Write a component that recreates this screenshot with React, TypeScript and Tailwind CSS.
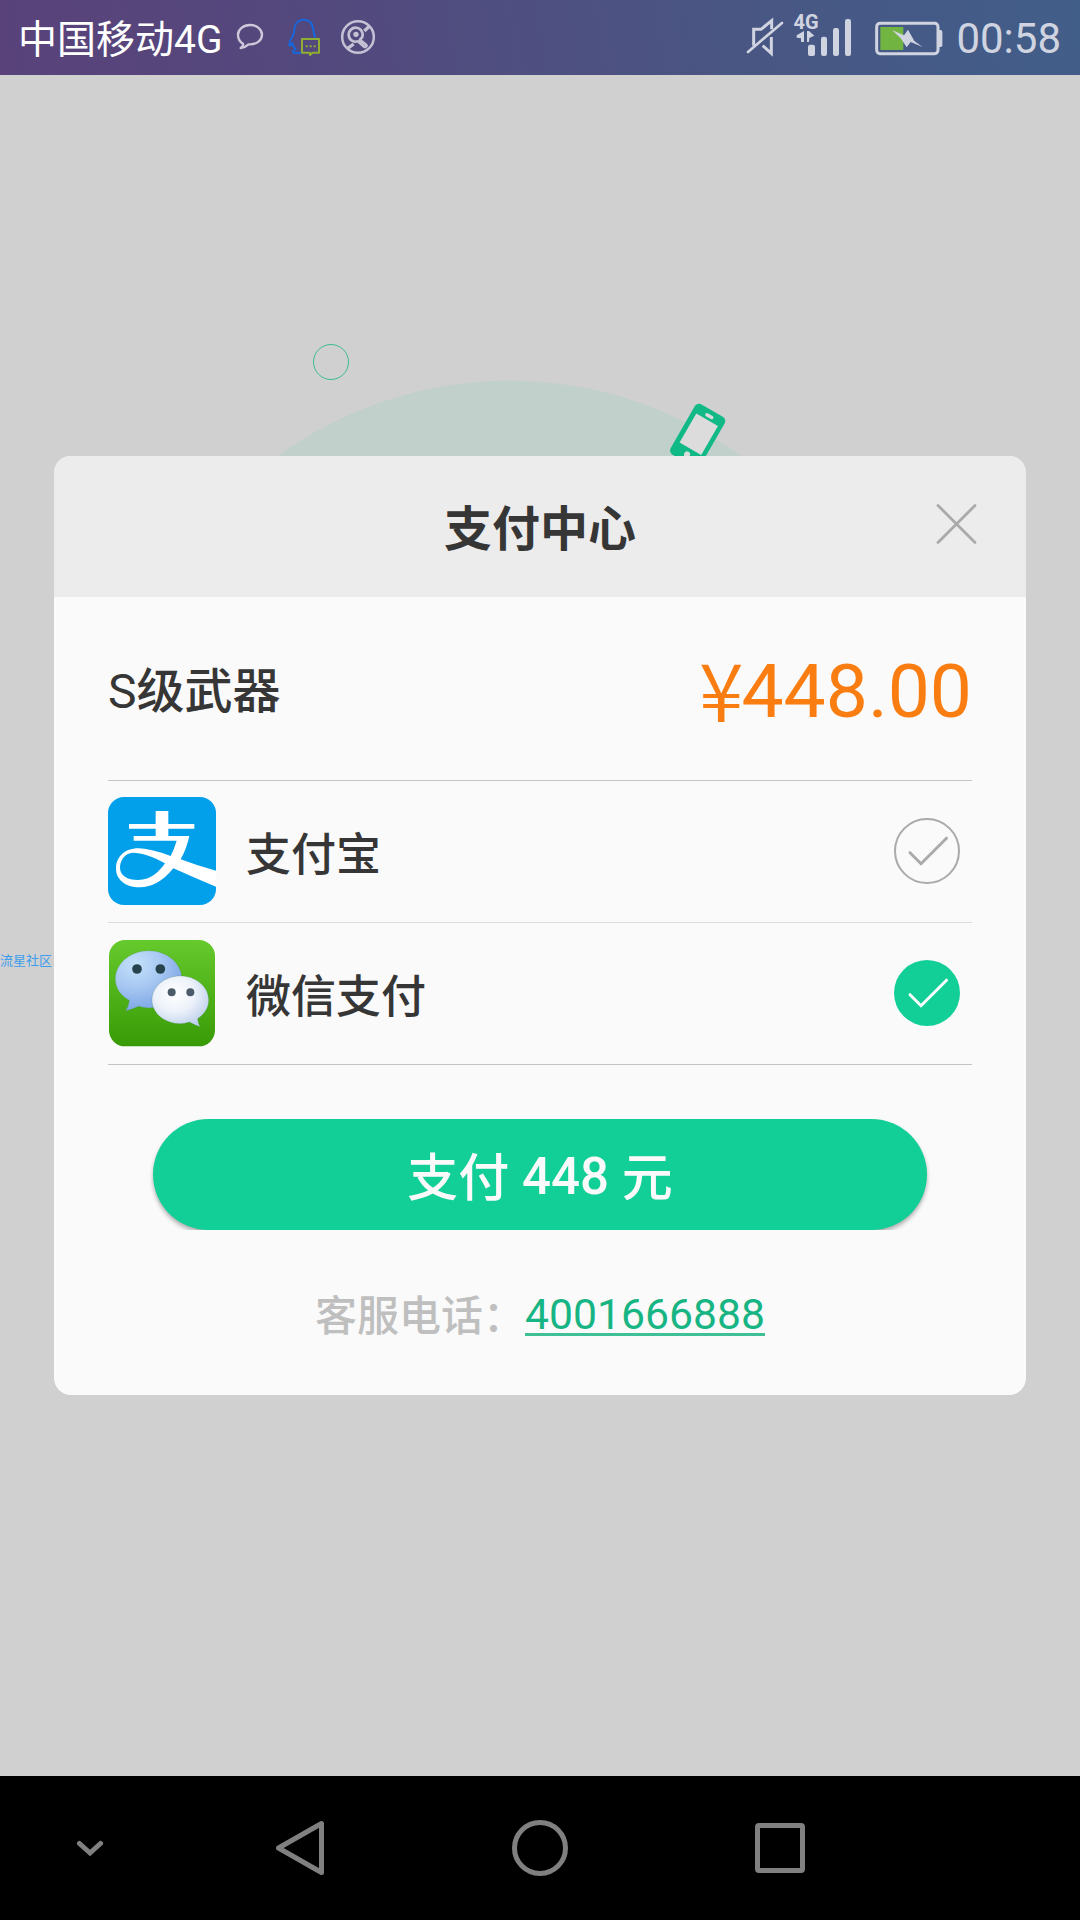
import { useState } from "react";

const FONT = "font-[Roboto,'Noto_Sans_CJK_SC',sans-serif]";

function StatusBar() {
  return (
    <header className="flex h-[75px] items-center justify-between bg-linear-[80deg,#59427a,#524a7e_35%,#4a5583_65%,#415e89] pr-[19px] pl-[18px] text-[#d0d4e0]">
      <div className="flex items-center">
        <span className="w-[210px] pt-[5px] text-[39px] leading-[75px] whitespace-nowrap text-white">中国移动4G</span>
        {/* message */}
        <svg className="ml-[8px] h-[75px] w-[28px]" viewBox="708 0 84 225" fill="none" stroke="#cdc9da" strokeWidth="7" strokeLinejoin="round">
          <path d="M729 131C719 125 714 116 714 104C714 88 730 75 750 75C770 75 786 88 786 104C786 121 770 133 750 133L746 133Q736 142 722 144Q731 139 729 131Z" />
        </svg>
        {/* QQ */}
        <svg className="ml-[23px] h-[75px] w-[34px]" viewBox="861 0 102 225" fill="none" strokeLinejoin="round">
          <path d="M946 113C942 107 942 98 940 90C938 71 928 59 911 59C894 59 884 72 883 89C883 97 880 104 877 111C870 121 867 130 869 137Q873 137 877 129Q880 140 887 148Q880 151 879 156Q882 161 903 158" stroke="#1767dc" strokeWidth="6" />
          <path d="M906 117H957V158H938L930 165V158H906Z" stroke="#8fae32" strokeWidth="6" />
          <path d="M917 136h6v6h-6zM929 136h6v6h-6zM941 136h6v6h-6z" fill="#8fae32" />
        </svg>
        {/* key in circle */}
        <svg className="ml-[19px] h-[75px] w-[36px]" viewBox="1020 0 108 225" fill="none" stroke="#c5c1d4">
          <circle cx="1074" cy="111" r="47.5" strokeWidth="7.5" />
          <path d="M1080 119L1098 134A4 4 0 0 1 1092 140L1074 124A21 21 0 1 1 1087 111Z" strokeWidth="8" strokeLinejoin="round" />
          <circle cx="1068" cy="103" r="8" fill="#c5c1d4" stroke="none" />
          <path d="M1043 145L1061 132M1093 93L1109 78" strokeWidth="10" />
        </svg>
      </div>

      <div className="flex items-center">
        {/* muted */}
        <svg className="h-[75px] w-[38px]" viewBox="75 0 114 225" fill="none" stroke="#d0d4e0">
          <path d="M98 137V88H120L152 62V88" strokeWidth="9" />
          <path d="M125 137L151 160V111" strokeWidth="9" />
          <path d="M81 156L183 69" strokeWidth="8" strokeLinecap="round" />
        </svg>
        {/* signal */}
        <div className="ml-[9px] flex h-[75px] w-[60px] flex-col pt-[12px]">
          <span className="h-[18px] text-[20px] leading-[20px] font-bold">4G</span>
          <svg className="-mt-[15px] h-[42px] w-[60px] shrink-0" viewBox="219 45 180 126" fill="#d0d4e0">
            <path d="M252 93V126H243V115L230 113V106Z M261 93V126H267L268 114L283 107L267 93Z" />
            <rect x="264" y="134" width="21" height="34" rx="6" />
            <rect x="303" y="110" width="18" height="58" rx="7" />
            <rect x="339" y="84" width="18" height="84" rx="7" />
            <rect x="375" y="57" width="18" height="111" rx="7" />
          </svg>
        </div>
        {/* charging battery */}
        <svg className="ml-[22px] h-[75px] w-[68px]" viewBox="464 0 204 225" fill="none">
          <rect x="469" y="70" width="184" height="91" rx="10" stroke="#d0d4e0" strokeWidth="9" />
          <path d="M656 90H661Q666 90 666 96V136Q666 141 661 141H656Z" fill="#d0d4e0" />
          <rect x="480" y="81" width="69" height="69" fill="#72b442" />
          <path d="M515 90L551 106L563 89L582 123L607 141L571 126L559 142L541 115Z" fill="#d0d4e0" />
        </svg>
        <span className="ml-[13px] pt-[3px] text-[42px] leading-[82px]">00:58</span>
      </div>
    </header>
  );
}

// Decoration behind the dialog
function Backdrop() {
  return (
    <svg className="absolute inset-0 h-full w-full" viewBox="0 75 1080 1701" fill="none">
      <clipPath id="above">
        <rect x="0" y="75" width="1080" height="400" />
      </clipPath>
      <circle cx="509.5" cy="774" r="393.5" fill="#c2d0cb" clipPath="url(#above)" />
      <circle cx="331" cy="362" r="17.5" stroke="#3abb94" />
      <g transform="translate(696.3 413.6) rotate(30)">
        <rect x="-5" y="-10.5" width="34.5" height="58" rx="5" fill="#10b986" />
        <rect width="25" height="33.5" fill="#dcdcdc" />
        <rect x="8" y="-6" width="9" height="3.4" rx="1.7" fill="#dcdcdc" />
        <circle cx="12.4" cy="40" r="3" fill="#dcdcdc" />
      </g>
    </svg>
  );
}

function AlipayIcon() {
  return (
    <svg className="size-[108px]" viewBox="0 0 324 324">
      <rect width="324" height="324" rx="48" fill="#02a0ea" />
      <path d="M143 42H181V81H259V95H181V117H143V95H63V81H143Z" fill="#fff" />
      <path
        fill="#fff"
        fillRule="evenodd"
        d="M77 117H244Q236 155 218 187Q270 207 324 221V269Q260 243 196 214Q150 271 95 271C50 271 24 245 24 215C24 180 50 154 91 154Q125 154 188 177Q199 155 206 131H77ZM171 199C135 178 100 167 75 167C50 168 36 190 36 213C36 235 58 249 90 249C130 249 155 222 171 199Z"
      />
    </svg>
  );
}

function WechatIcon() {
  return (
    <svg className="size-[108px]" viewBox="0 0 324 324">
      <defs>
        <linearGradient id="green" x1="0" y1="0" x2="0" y2="1">
          <stop stopColor="#66c92c" />
          <stop offset="1" stopColor="#389b06" />
        </linearGradient>
        <radialGradient id="blue" cx=".3" cy=".22" r=".75">
          <stop stopColor="#c3e0f9" />
          <stop offset=".5" stopColor="#a9c9f3" />
          <stop offset="1" stopColor="#80a9e6" />
        </radialGradient>
        <radialGradient id="white" cx=".4" cy=".35" r=".7">
          <stop stopColor="#fff" />
          <stop offset=".5" stopColor="#edf2fa" />
          <stop offset="1" stopColor="#bccfec" />
        </radialGradient>
      </defs>
      <rect x="3" y="3" width="318" height="319" rx="48" fill="url(#green)" />
      <g fill="url(#blue)" stroke="#3f8f3a" strokeOpacity=".35" strokeWidth="2">
        <path d="M64 184Q62 202 53 216Q77 209 92 202Q107 207 122 207C177 207 222 169 222 121S177 35 122 35S22 73 22 121C22 147 38 171 64 184Z" />
      </g>
      <g fill="url(#white)" stroke="#3b7a4a" strokeOpacity=".35" strokeWidth="2">
        <path d="M269 239Q270 252 276 263Q260 258 244 249Q231 254 217 254C170 254 132 223 132 183S170 111 217 111S302 143 302 183C302 206 290 225 269 239Z" />
      </g>
      <g fill="#26424d">
        <circle cx="87" cy="90" r="14.5" />
        <circle cx="157" cy="90" r="14.5" />
      </g>
      <g fill="#4b5b69">
        <circle cx="191" cy="160" r="12" />
        <circle cx="247" cy="160" r="12" />
      </g>
    </svg>
  );
}

function Check({ checked }: { checked: boolean }) {
  return (
    <svg className="size-[66px]" viewBox="0 0 66 66" fill="none">
      {checked ? (
        <circle cx="33" cy="33" r="33" fill="#12cf97" />
      ) : (
        <circle cx="33" cy="33" r="32" stroke="#aaa" strokeWidth="2" />
      )}
      <path
        d="M16 34.7L27 45.7L52.5 20.2"
        stroke={checked ? "#fff" : "#aaa"}
        strokeWidth="3"
        strokeLinecap="round"
      />
    </svg>
  );
}

const methods = [
  { id: "alipay", name: "支付宝", icon: <AlipayIcon /> },
  { id: "wechat", name: "微信支付", icon: <WechatIcon /> },
];

function PayDialog() {
  const [selected, setSelected] = useState("wechat");

  return (
    <section className="relative h-[939px] w-[972px] overflow-hidden rounded-[17px] bg-[#fafafa] text-[#363636]">
      <div className="flex h-[141px] items-center bg-[#ececec]">
        <div className="w-[90px]" />
        <h1 className="flex-1 pt-[6px] text-center text-[48px] leading-none font-bold">支付中心</h1>
        <button className="w-[90px] pb-[5px]" aria-label="close">
          <svg className="size-[42px]" viewBox="0 0 42 42" stroke="#aaa" strokeWidth="2.8" strokeLinecap="round">
            <path d="M2 2.5L39 39.5M39 2.5L2 39.5" />
          </svg>
        </button>
      </div>

      <div className="px-[54px]">
        <div className="flex h-[184px] items-center justify-between border-b border-[#c3c3c7] pt-[7px]">
          <span className="text-[48px] leading-none font-medium">
            <span className="font-normal">S</span>级武器
          </span>
          <span className="flex items-center pb-[1px] text-[75px] leading-none text-[#f97d11]">
            <span className="pb-[10px] font-['Noto_Sans_CJK_SC',sans-serif] text-[81px] leading-[75px] font-[350]">¥</span>
            <span className="-ml-[2px]">448.00</span>
          </span>
        </div>

        {methods.map((m, i) => (
          <button
            key={m.id}
            onClick={() => setSelected(m.id)}
            className={`flex h-[142px] w-full items-center border-b pr-[12px] pb-[2px] ${
              i === methods.length - 1 ? "border-[#c3c3c7]" : "border-[#dcdcdc]"
            }`}
          >
            {m.icon}
            <span className="ml-[30px] flex-1 pt-[9px] text-left text-[45px] leading-none font-medium">{m.name}</span>
            <Check checked={selected === m.id} />
          </button>
        ))}
      </div>

      {/* the button's shadow is cut off at its bottom edge */}
      <div className="mt-[54px] flex h-[111px] justify-center overflow-hidden">
        <button className="h-[111px] w-[774px] rounded-full bg-[#12cf97] pt-[4px] text-[51px] leading-none font-medium text-[#fafafa] shadow-[0_3px_4px_rgba(0,0,0,0.3)]">
          <span className="relative top-[2px]">支付</span> 448 <span className="relative top-[2px]">元</span>
        </button>
      </div>

      <p className="mt-[62px] flex items-center justify-center text-[42px] leading-none font-medium text-[#bfbfbf]">
        <span className="pt-[4px]">客服电话：</span>
        <a className="border-b-[3px] border-[#3fbf95] text-[42.7px] leading-[38px] font-normal text-[#17b583]">4001666888</a>
      </p>
    </section>
  );
}

function NavBar() {
  return (
    <nav className="flex h-[144px] items-center bg-black">
      <svg className="ml-[76px] size-[28px]" viewBox="0 0 28 28" fill="none" stroke="#808080" strokeWidth="5" strokeLinecap="round">
        <path d="M3.5 9.5L14 19L24.5 9.5" />
      </svg>
      <svg className="ml-[170px] h-[58px] w-[52px]" viewBox="0 0 52 58" fill="none" stroke="#808080" strokeWidth="5" strokeLinejoin="round">
        <path d="M4.5 29L47.5 4.5V53.5Z" />
      </svg>
      <div className="ml-[186px] size-[56px] rounded-full border-[5px] border-[#808080]" />
      <div className="ml-[187px] size-[50px] rounded-[4px] border-[5px] border-[#808080]" />
    </nav>
  );
}

export default function App() {
  return (
    <div className={`flex h-[1920px] w-[1080px] flex-col bg-[#d0d0d0] ${FONT}`}>
      <StatusBar />
      <main className="relative flex flex-1 items-center justify-center">
        <Backdrop />
        <span className="absolute top-[879px] left-0 text-[13px] leading-[14px] text-[#3c9dee]">流星社区</span>
        <PayDialog />
      </main>
      <NavBar />
    </div>
  );
}
